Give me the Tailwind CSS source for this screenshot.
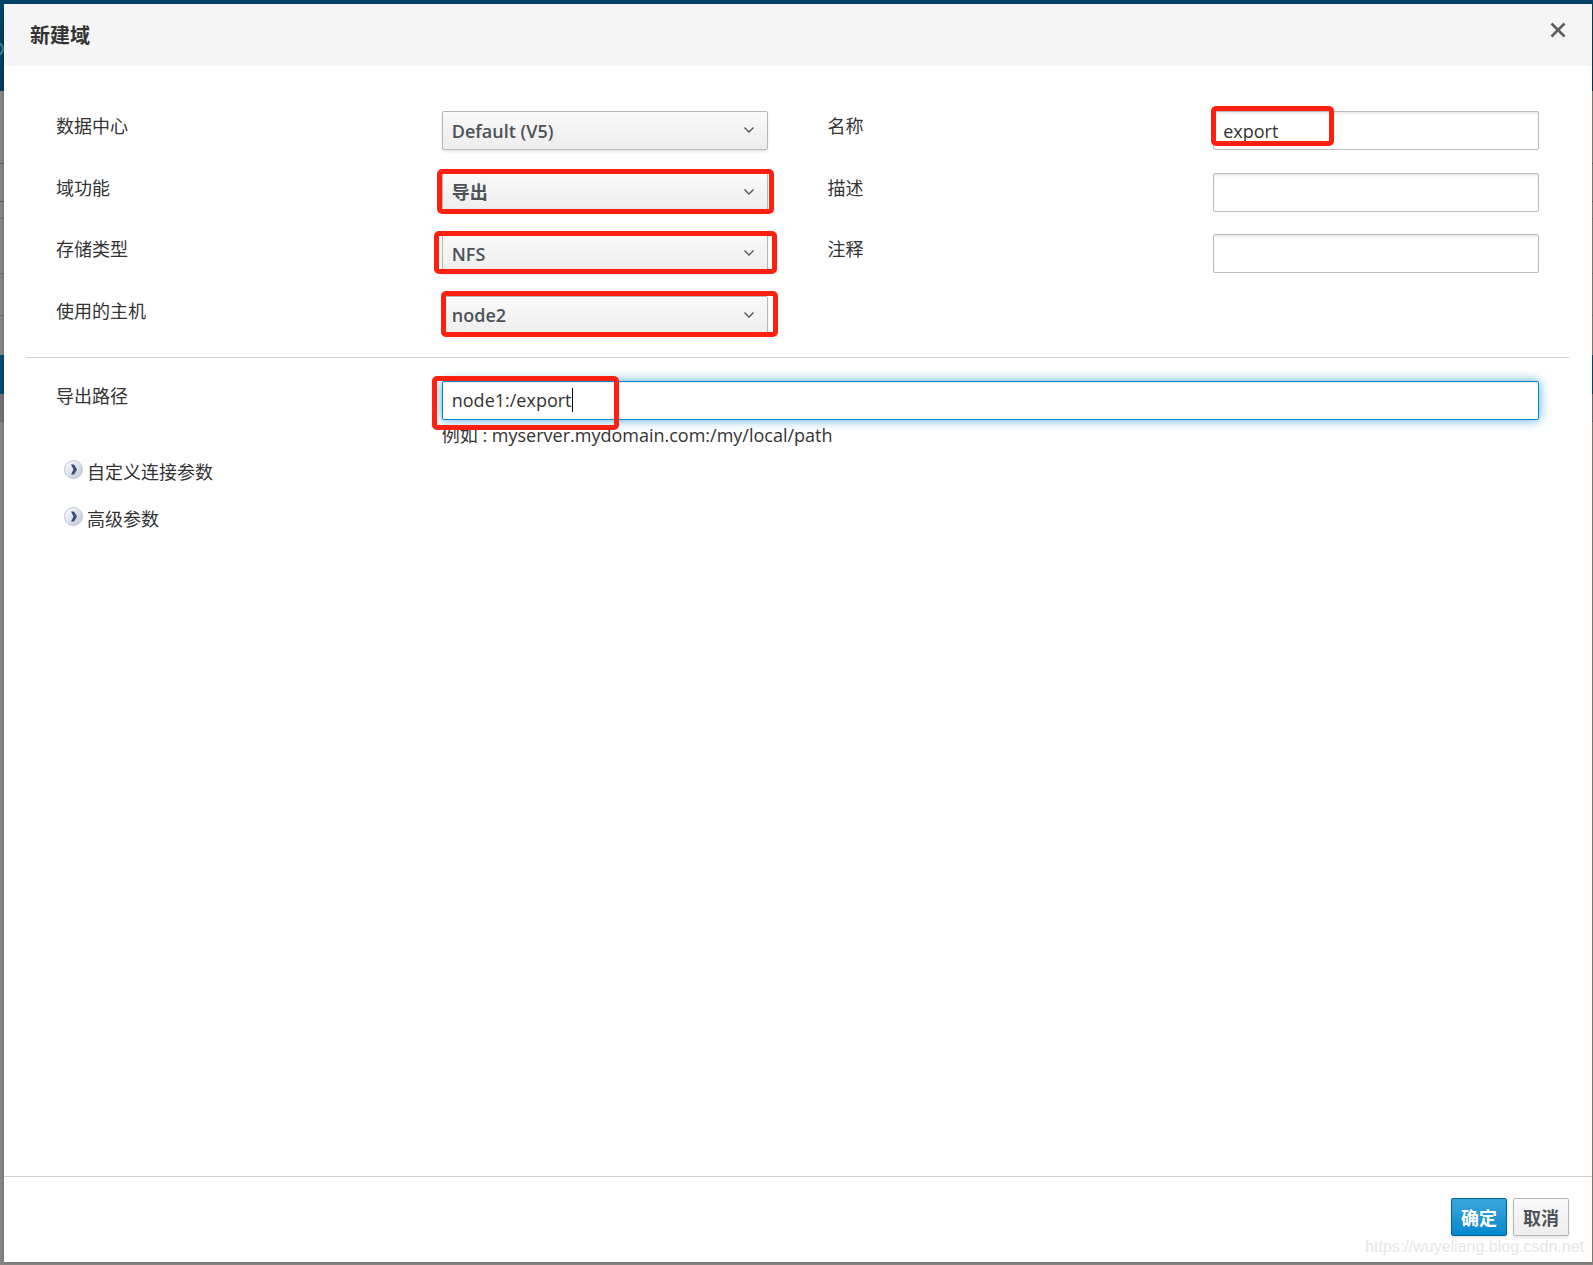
<!DOCTYPE html>
<html lang="zh-CN">
<head>
<meta charset="utf-8">
<title>新建域</title>
<script src="https://cdn.jsdelivr.net/npm/@tailwindcss/browser@4"></script>
</head>
<body class="h-screen overflow-hidden font-['Open_Sans','Noto_Sans_CJK_SC',sans-serif] text-lg leading-[30px] text-[#333333]">
<div class="relative h-full bg-[#8a8785]">
  <!-- page behind the dialog -->
  <div class="flex h-full flex-col" aria-hidden="true">
    <div class="flex h-[91px] shrink-0 items-center overflow-hidden bg-linear-to-b from-[#00456a] to-[#003c60] pt-1.5">
      <div class="-ml-2.5 size-3.5 rounded-full border-2 border-[#4f7c98]"></div>
    </div>
    <div class="h-[73px] shrink-0 border-b border-[#5e5d5c]"></div>
    <div class="h-[38px] shrink-0 border-b border-[#5e5d5c]"></div>
    <div class="h-[17px] shrink-0 border-b border-[#737170]"></div>
    <div class="h-[55px] shrink-0 border-b border-[#737170]"></div>
    <div class="h-[42px] shrink-0 border-b border-[#737170]"></div>
    <div class="h-[39px] shrink-0"></div>
    <div class="h-[39px] shrink-0 bg-[#004d76]"></div>
    <div class="h-[28px] shrink-0 border-b border-[#6a6866] bg-[#787573]"></div>
    <div class="flex-1"></div>
  </div>

  <form role="dialog" aria-labelledby="title" class="absolute top-1 right-px bottom-[3px] left-1 flex flex-col bg-white shadow-[0_0_4px_rgba(0,0,0,0.3)]">
    <header class="flex h-[62px] shrink-0 items-start justify-between bg-[#f5f5f5] pt-4 pr-6 pl-[26px]">
      <h1 id="title" class="text-xl leading-8 font-bold">新建域</h1>
      <button type="button" aria-label="关闭" class="flex size-5 items-center justify-center">
        <svg class="size-4" viewBox="0 0 16 16" fill="none" stroke="#5f5f5f" stroke-width="2.600"><path d="M1.500 1.500 14.500 14.500M14.500 1.500 1.500 14.500"/></svg>
      </button>
    </header>

    <main class="flex-1 pt-[45px] pr-[23px] pl-[22px]">
      <div class="grid h-[224px] grid-cols-4 content-between">
        <label for="dc" class="h-[39px] px-[30px]">数据中心</label>
        <div class="relative mx-[30px] h-[39px]">
          <select id="dc" class="h-full w-full appearance-none rounded-xs border border-[#b7b7b7] bg-linear-to-b from-[#fafafa] to-[#ededed] px-[9px] font-semibold text-[#4d5258] shadow-[0_2px_3px_rgba(3,3,3,0.1)]"><option>Default (V5)</option></select>
          <svg class="pointer-events-none absolute top-4 right-3.5 h-1.5 w-2.5" viewBox="0 0 10 6" fill="none" stroke="#4d5258" stroke-width="1.3"><path d="M.5.5 5 5 9.500.5"/></svg>
        </div>
        <label for="name" class="h-[39px] px-[30px]">名称</label>
        <div class="relative mx-[30px] h-[39px]">
          <input id="name" type="text" value="export" class="h-full w-full rounded-xs border border-[#bbbbbb] bg-white px-[9px] shadow-[inset_0_2px_2px_rgba(3,3,3,0.08)]">
          <div class="pointer-events-none absolute -top-[5px] -left-0.5 h-10 w-[123px] rounded-[5px] border-5 border-[#ff2010]"></div>
        </div>

        <label for="func" class="h-[39px] px-[30px]">域功能</label>
        <div class="relative mx-[30px] h-[39px]">
          <select id="func" class="h-full w-full appearance-none rounded-xs border border-[#b7b7b7] bg-linear-to-b from-[#fafafa] to-[#ededed] px-[9px] font-bold text-[#4d5258] shadow-[0_2px_3px_rgba(3,3,3,0.1)]"><option>导出</option></select>
          <svg class="pointer-events-none absolute top-4 right-3.5 h-1.5 w-2.5" viewBox="0 0 10 6" fill="none" stroke="#4d5258" stroke-width="1.3"><path d="M.5.5 5 5 9.500.5"/></svg>
          <div class="pointer-events-none absolute -top-1 -right-1.5 -bottom-0.5 -left-[5px] rounded-[5px] border-5 border-[#ff2010]"></div>
        </div>
        <label for="desc" class="h-[39px] px-[30px]">描述</label>
        <div class="mx-[30px] h-[39px]">
          <input id="desc" type="text" class="h-full w-full rounded-xs border border-[#bbbbbb] bg-white px-[9px] shadow-[inset_0_2px_2px_rgba(3,3,3,0.08)]">
        </div>

        <label for="type" class="h-[39px] px-[30px]">存储类型</label>
        <div class="relative mx-[30px] h-[39px]">
          <select id="type" class="h-full w-full appearance-none rounded-xs border border-[#b7b7b7] bg-linear-to-b from-[#fafafa] to-[#ededed] px-[9px] font-semibold text-[#4d5258] shadow-[0_2px_3px_rgba(3,3,3,0.1)]"><option>NFS</option></select>
          <svg class="pointer-events-none absolute top-4 right-3.5 h-1.5 w-2.5" viewBox="0 0 10 6" fill="none" stroke="#4d5258" stroke-width="1.3"><path d="M.5.5 5 5 9.500.5"/></svg>
          <div class="pointer-events-none absolute -top-[3px] -right-[9px] -bottom-px -left-2 rounded-[5px] border-5 border-[#ff2010]"></div>
        </div>
        <label for="note" class="h-[39px] px-[30px]">注释</label>
        <div class="mx-[30px] h-[39px]">
          <input id="note" type="text" class="h-full w-full rounded-xs border border-[#bbbbbb] bg-white px-[9px] shadow-[inset_0_2px_2px_rgba(3,3,3,0.08)]">
        </div>

        <label for="host" class="h-[39px] px-[30px]">使用的主机</label>
        <div class="relative mx-[30px] h-[39px]">
          <select id="host" class="h-full w-full appearance-none rounded-xs border border-[#b7b7b7] bg-linear-to-b from-[#fafafa] to-[#ededed] px-[9px] font-semibold text-[#4d5258] shadow-[0_2px_3px_rgba(3,3,3,0.1)]"><option>node2</option></select>
          <svg class="pointer-events-none absolute top-4 right-3.5 h-1.5 w-2.5" viewBox="0 0 10 6" fill="none" stroke="#4d5258" stroke-width="1.3"><path d="M.5.5 5 5 9.500.5"/></svg>
          <div class="pointer-events-none absolute -top-[5px] -right-2.5 -bottom-0.5 -left-px rounded-[5px] border-5 border-[#ff2010]"></div>
        </div>
      </div>

      <hr class="mt-[22px] border-[#d1d1d1]">

      <div class="mt-[23px] grid grid-cols-4">
        <label for="path" class="px-[30px]">导出路径</label>
        <div class="relative col-span-3 mx-[30px]">
          <input id="path" type="text" value="node1:/export" class="block h-[39px] w-full rounded-xs border border-[#0088ce] bg-white px-[9px] pb-0.5 shadow-[inset_0_1px_1px_rgba(3,3,3,0.075),0_0_11px_rgba(0,136,206,0.7)]">
          <div class="pointer-events-none absolute top-[7px] left-[130px] h-6 w-px bg-black"></div>
          <p>例如 : myserver.mydomain.com:/my/local/path</p>
          <div class="pointer-events-none absolute -top-[5px] -left-2.5 h-[54px] w-[187px] rounded-[5px] border-5 border-[#ff2010]"></div>
        </div>
      </div>

      <div class="mt-1.5 flex flex-col items-start gap-[15px] pl-[38px]">
        <button type="button" class="flex items-start gap-1 leading-8">
          <svg class="mt-1 size-[19px]" viewBox="0 0 19 19"><defs><linearGradient id="orb" x1="0" y1="0" x2="1" y2="1"><stop offset="0" stop-color="#ffffff"/><stop offset="1" stop-color="#bcc4da"/></linearGradient></defs><circle cx="9.500" cy="9.500" r="9" fill="url(#orb)" stroke="#c0c6d4"/><path d="M7 4.500h3L13 9.500 10 14.500H7L9.500 9.500Z" fill="#3a4b70"/></svg>
          <span>自定义连接参数</span>
        </button>
        <button type="button" class="flex items-start gap-1 leading-8">
          <svg class="mt-1 size-[19px]" viewBox="0 0 19 19"><circle cx="9.500" cy="9.500" r="9" fill="url(#orb)" stroke="#c0c6d4"/><path d="M7 4.500h3L13 9.500 10 14.500H7L9.500 9.500Z" fill="#3a4b70"/></svg>
          <span>高级参数</span>
        </button>
      </div>
    </main>

    <footer class="flex h-[86px] shrink-0 items-start justify-end gap-1.5 border-t border-[#d1d1d1] pt-[21px] pr-[23px]">
      <button type="submit" class="h-[38px] w-14 rounded-xs border border-[#00659c] bg-linear-to-b from-[#39a5dc] to-[#0088ce] pt-0.5 font-bold text-white shadow-[0_2px_3px_rgba(3,3,3,0.1)]">确定</button>
      <button type="button" class="h-[38px] w-14 rounded-xs border border-[#b7b7b7] bg-linear-to-b from-[#fafafa] to-[#ededed] pt-0.5 font-bold text-[#4d5258] shadow-[0_2px_3px_rgba(3,3,3,0.1)]">取消</button>
    </footer>
  </form>

  <div class="pointer-events-none absolute right-[9px] bottom-1.5 font-['Liberation_Sans',sans-serif] text-base leading-6 text-[#e6e6e6]">https://wuyeliang.blog.csdn.net</div>
</div>
</body>
</html>
